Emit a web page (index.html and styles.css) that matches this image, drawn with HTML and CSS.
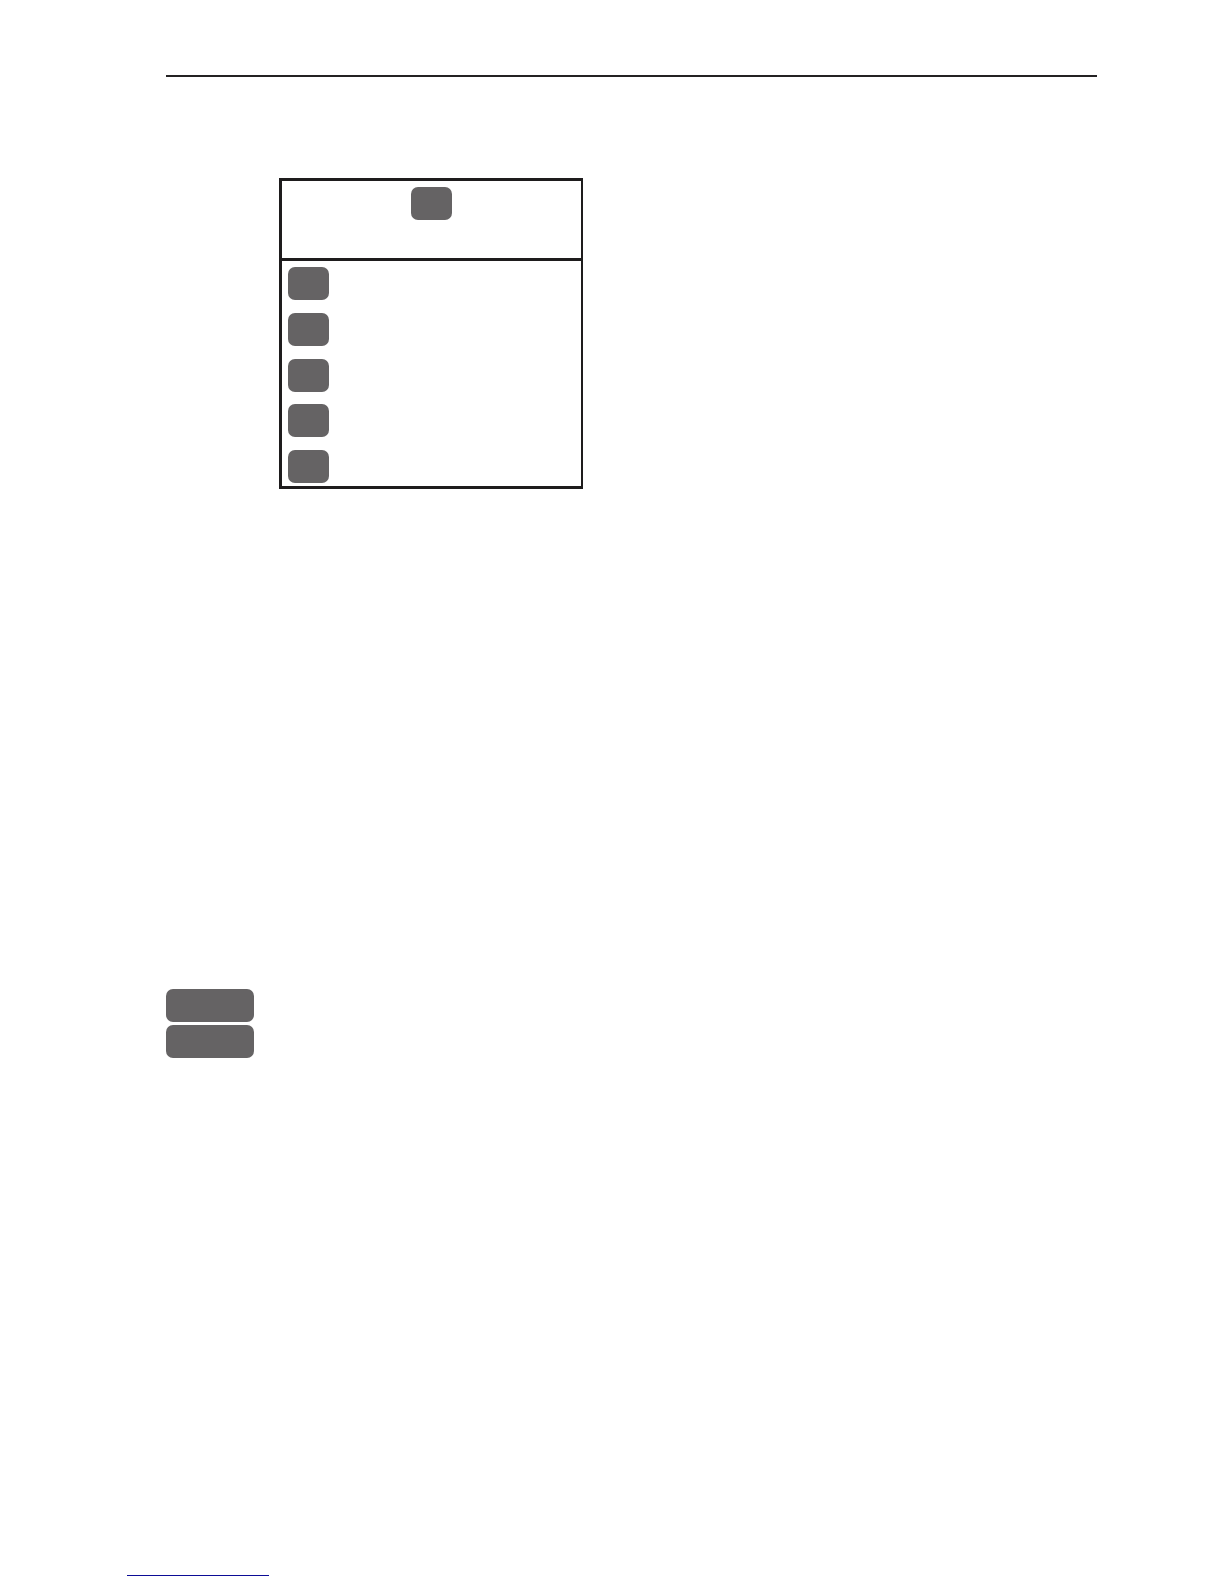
FILE: index.html
```
<!DOCTYPE html>
<html lang="en">
<head>
  <meta charset="utf-8">
  <meta name="viewport" content="width=device-width, initial-scale=1">
  <title>Manual page</title>
  <link rel="stylesheet" href="styles.css">
</head>
<body>
  <header class="page-header"></header>
  <main class="content">
    <section class="menu" aria-label="Menu">
      <div class="menu-head">
        <button class="key" type="button" aria-label="Menu key"></button>
      </div>
      <div class="menu-body">
        <button class="key" type="button" aria-label="Key 1"></button>
        <button class="key" type="button" aria-label="Key 2"></button>
        <button class="key" type="button" aria-label="Key 3"></button>
        <button class="key" type="button" aria-label="Key 4"></button>
        <button class="key" type="button" aria-label="Key 5"></button>
      </div>
    </section>
    <div class="side-keys">
      <button class="key key-wide" type="button" aria-label="Upper key"></button>
      <button class="key key-wide" type="button" aria-label="Lower key"></button>
    </div>
  </main>
  <footer class="page-footer">
    <a class="footer-link" href="#" aria-label="Back to top"></a>
  </footer>
</body>
</html>
```

FILE: styles.css
```
* {
  box-sizing: border-box;
}

body {
  display: flex;
  flex-direction: column;
  min-height: 100vh;
  margin: 0;
  background: #fff;
  font-family: "Liberation Sans", Arial, sans-serif;
}

.page-header {
  margin: 75px 127px 0 166px;
  border-top: 2px solid #242223;
}

.content {
  display: flex;
  flex-direction: column;
  align-items: flex-start;
  gap: 500px;
  padding: 101px 127px 0 166px;
}

.menu {
  width: 304px;
  margin-left: 113px;
  border: 3px solid #1e1c1d;
  border-right-width: 2px;
}

.menu-head {
  display: flex;
  justify-content: center;
  align-items: flex-start;
  min-height: 80px;
  padding-top: 6px;
  border-bottom: 3px solid #1e1c1d;
}

.menu-body {
  display: flex;
  flex-direction: column;
  justify-content: space-between;
  align-items: flex-start;
  min-height: 225px;
  padding: 6px 6px 3px;
}

.key {
  width: 41px;
  height: 33px;
  padding: 0;
  border: 0;
  border-radius: 7px;
  background: #656364;
}

.key-wide {
  width: 88px;
}

.side-keys {
  display: flex;
  flex-direction: column;
  gap: 3px;
}

.page-footer {
  display: flex;
  margin-top: auto;
  padding: 0 127px 8px;
}

.footer-link {
  width: 142px;
  border-bottom: 1px solid #0c0c96;
}
```
